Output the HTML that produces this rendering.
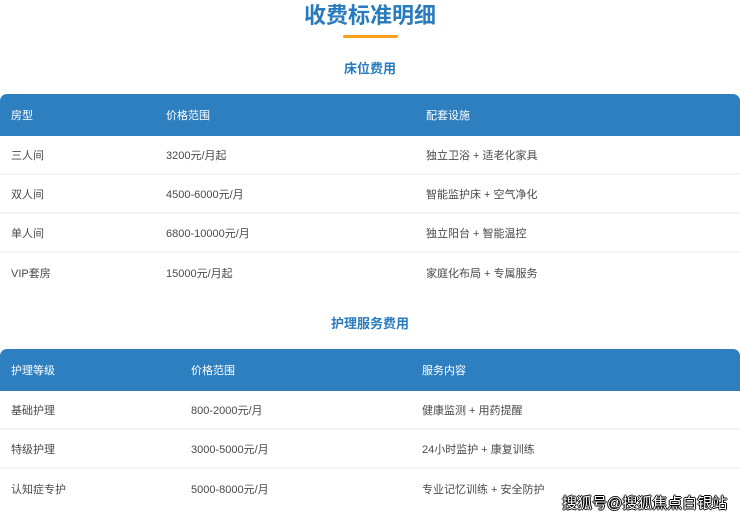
<!DOCTYPE html><html><head><meta charset="utf-8"><style>
*{margin:0;padding:0;box-sizing:border-box}
body{width:740px;height:520px;overflow:hidden;background:#fff;font-family:"Liberation Sans","Noto Sans CJK SC",sans-serif;position:relative;color:#4a4a4a}
.t{position:absolute;left:0;width:740px;text-align:center;color:#2a7bbd;font-weight:bold}
.tb{position:absolute;left:0;width:740px}
.h{background:#2d7fbf;color:#fff;height:42px;border-radius:7px 7px 0 0;position:relative;font-size:11px}
.r{height:39px;position:relative;font-size:11px;border-bottom:2px solid #f3f4f6}
.h span,.r span{position:absolute;top:50%;transform:translateY(-50%)}
.wm{position:absolute;left:562px;top:492px;font-size:15px;color:#fff;text-shadow:-1px 0 #000,1px 0 #000,0 -1px #000,0 1px #000}
</style></head><body>
<div class="t" style="top:-2px;font-size:22px">收费标准明细</div>
<div style="position:absolute;left:343px;top:35px;width:55px;height:3px;background:#f5a01a;border-radius:2px"></div>
<div class="t" style="top:58px;font-size:13px">床位费用</div>
<div class="tb" style="top:94px">
<div class="h"><span style="left:11px">房型</span><span style="left:166px">价格范围</span><span style="left:426px">配套设施</span></div>
<div class="r"><span style="left:11px">三人间</span><span style="left:166px">3200元/月起</span><span style="left:426px">独立卫浴 + 适老化家具</span></div>
<div class="r"><span style="left:11px">双人间</span><span style="left:166px">4500-6000元/月</span><span style="left:426px">智能监护床 + 空气净化</span></div>
<div class="r"><span style="left:11px">单人间</span><span style="left:166px">6800-10000元/月</span><span style="left:426px">独立阳台 + 智能温控</span></div>
<div class="r" style="border:none"><span style="left:11px">VIP套房</span><span style="left:166px">15000元/月起</span><span style="left:426px">家庭化布局 + 专属服务</span></div>
</div>
<div class="t" style="top:313px;font-size:13px">护理服务费用</div>
<div class="tb" style="top:349px">
<div class="h"><span style="left:11px">护理等级</span><span style="left:191px">价格范围</span><span style="left:422px">服务内容</span></div>
<div class="r"><span style="left:11px">基础护理</span><span style="left:191px">800-2000元/月</span><span style="left:422px">健康监测 + 用药提醒</span></div>
<div class="r"><span style="left:11px">特级护理</span><span style="left:191px">3000-5000元/月</span><span style="left:422px">24小时监护 + 康复训练</span></div>
<div class="r" style="border:none"><span style="left:11px">认知症专护</span><span style="left:191px">5000-8000元/月</span><span style="left:422px">专业记忆训练 + 安全防护</span></div>
</div>
<div class="wm">搜狐号@搜狐焦点白银站</div>
</body></html>
